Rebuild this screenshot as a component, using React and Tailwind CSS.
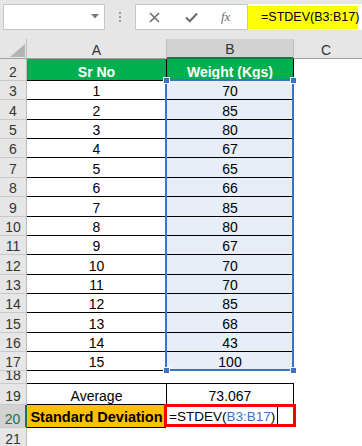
import React from "react";

const HEIGHTS = [19, 20, 19, 19, 20, 19, 20, 19, 19, 20, 19, 19, 20, 19, 19];
const WEIGHTS = [70, 85, 80, 67, 65, 66, 85, 80, 67, 70, 70, 85, 68, 43, 100];

function RowHead({ label, active }) {
  return (
    <div
      className={
        active
          ? "w-[27px] shrink-0 flex items-end justify-center overflow-hidden leading-[16px] bg-[#d2d2d2] text-[#217346] border-b border-b-[#c8c8c8] border-r-2 border-r-[#217346]"
          : "w-[27px] shrink-0 flex items-end justify-center overflow-hidden leading-[16px] bg-[#e6e6e6] text-[#333] border-b border-b-[#c8c8c8] border-r border-r-[#bdbdbd]"
      }
    >
      {label}
    </div>
  );
}

export default function App() {
  return (
    <div className="relative w-[362px] h-[446px] overflow-hidden bg-white text-[14px] text-black font-['Liberation_Sans',Arial,sans-serif]">
      {/* formula bar */}
      <div className="h-[39px] bg-[#e6e6e6] flex items-start pt-[4px]">
        <div className="relative ml-[3px] w-[102px] h-[26px] bg-white border border-[#c6c6c6]">
          <svg className="absolute left-[87px] top-[9px]" width="8" height="5" viewBox="0 0 8 5">
            <path d="M0 0H8L4 4.5Z" fill="#777" />
          </svg>
        </div>
        <div className="w-[30px] flex flex-col items-center gap-[2px] pt-[8px]">
          <span className="w-[2px] h-[2px] bg-[#9a9a9a]" />
          <span className="w-[2px] h-[2px] bg-[#9a9a9a]" />
          <span className="w-[2px] h-[2px] bg-[#9a9a9a]" />
        </div>
        <div className="w-[113px] h-[26px] bg-white border border-[#c6c6c6] flex items-center">
          <svg className="ml-[13px]" width="11" height="11" viewBox="0 0 11 11">
            <path d="M1 1L10 10M10 1L1 10" stroke="#6e6e6e" strokeWidth="1.6" />
          </svg>
          <svg className="ml-[25px]" width="13" height="11" viewBox="0 0 13 11">
            <path d="M1 5.5L4.8 9.2L12 1.5" stroke="#6e6e6e" strokeWidth="2.2" fill="none" />
          </svg>
          <span className="ml-[23px] text-[13px] italic text-[#6e6e6e] font-['Liberation_Serif',serif]">fx</span>
        </div>
        <div className="flex-1 h-[26px] bg-white flex items-center">
          <div className="w-[110px] h-[23px] bg-[#ffff00] flex items-center pl-[13px] text-[12.5px] whitespace-nowrap">
            =STDEV(B3:B17)
          </div>
        </div>
      </div>

      {/* column headers */}
      <div className="flex h-[20px] text-[#333] leading-[16px]">
        <div className="relative w-[27px] shrink-0 bg-[#e6e6e6] border-r border-b border-r-[#bdbdbd] border-b-[#9f9f9f]">
          <svg className="absolute right-[1px] bottom-[1px]" width="15" height="13" viewBox="0 0 15 13">
            <path d="M15 0V13H0Z" fill="#b4b4b4" />
          </svg>
        </div>
        <div className="w-[140px] shrink-0 bg-[#e6e6e6] flex items-end justify-center border-r border-b border-r-[#bdbdbd] border-b-[#9f9f9f]">A</div>
        <div className="w-[127px] shrink-0 bg-[#d2d2d2] flex items-end justify-center border-r border-r-[#bdbdbd] border-b-2 border-b-[#217346]">B</div>
        <div className="flex-1 bg-[#e6e6e6] flex items-end justify-center border-b border-b-[#9f9f9f] pr-[4px]">C</div>
      </div>

      {/* row 2 */}
      <div className="flex h-[22px] leading-[16px]">
        <RowHead label="2" />
        <div className="w-[140px] shrink-0 bg-[#00b050] text-white font-bold flex items-end justify-center border-r border-b border-black">Sr No</div>
        <div className="w-[127px] shrink-0 bg-[#00b050] text-white font-bold flex items-end justify-center border-r border-b border-black">Weight (Kgs)</div>
      </div>

      {/* rows 3-17 */}
      {WEIGHTS.map((w, i) => (
        <div key={i} className="flex leading-[16px]" style={{ height: HEIGHTS[i] }}>
          <RowHead label={i + 3} />
          <div className="w-[140px] shrink-0 flex items-end justify-center border-r border-b border-black">{i + 1}</div>
          <div className="w-[127px] shrink-0 bg-[#e8eef8] flex items-end justify-center border-r border-b border-black">{w}</div>
        </div>
      ))}

      {/* row 18 */}
      <div className="flex h-[13px] leading-[16px]">
        <RowHead label="18" />
        <div className="w-[140px] shrink-0 border-b border-black" />
        <div className="w-[127px] shrink-0 border-b border-black" />
      </div>

      {/* row 19 */}
      <div className="flex h-[21px] leading-[16px]">
        <RowHead label="19" />
        <div className="w-[140px] shrink-0 flex items-end justify-center border-r border-b border-black">Average</div>
        <div className="w-[127px] shrink-0 flex items-end justify-center border-r border-b border-black">73.067</div>
      </div>

      {/* row 20 */}
      <div className="flex h-[23px] leading-[16px]">
        <RowHead label="20" active />
        <div className="w-[139px] shrink-0 bg-[#ffc000] font-bold text-[14.5px] flex items-end justify-center pb-[2px] border-b border-black whitespace-nowrap">
          Standard Deviation
        </div>
        <div className="relative w-[127px] shrink-0 flex items-end pl-[3px] pb-[3px] text-[13.5px] whitespace-nowrap">
          <span>
            =STDEV(<span className="text-[#3c72c4]">B3:B17</span>)
          </span>
          <span className="absolute left-[111px] top-[2px] w-px h-[19px] bg-black" />
        </div>
      </div>

      {/* row 21 */}
      <div className="flex h-[20px] leading-[16px]">
        <RowHead label="21" />
      </div>

      {/* referenced range highlight */}
      <div className="absolute left-[165px] top-[79px] w-[129px] h-[292px] border-2 border-[#3c72c4] pointer-events-none" />
      <span className="absolute left-[163px] top-[77px] w-[7px] h-[7px] bg-[#3c72c4] border border-white" />
      <span className="absolute left-[290px] top-[77px] w-[7px] h-[7px] bg-[#3c72c4] border border-white" />
      <span className="absolute left-[163px] top-[367px] w-[7px] h-[7px] bg-[#3c72c4] border border-white" />
      <span className="absolute left-[290px] top-[367px] w-[7px] h-[7px] bg-[#3c72c4] border border-white" />

      {/* active cell */}
      <div className="absolute left-[164px] top-[404px] w-[132px] h-[23px] border-[3px] border-[#ff0000] pointer-events-none" />
    </div>
  );
}
